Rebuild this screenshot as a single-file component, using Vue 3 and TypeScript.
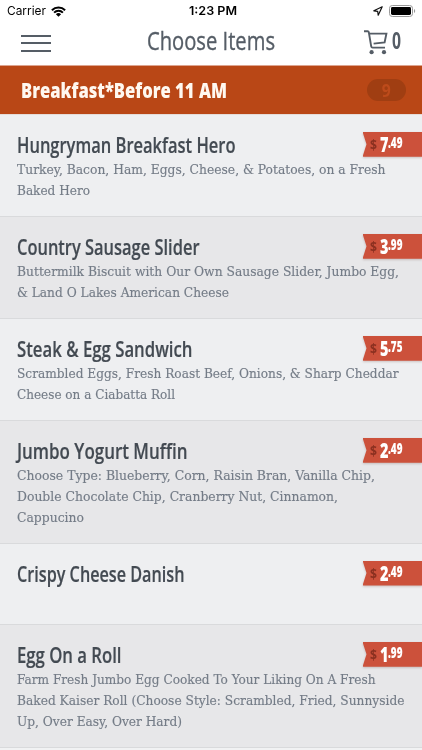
<script setup lang="ts">
interface Line {
  text: string
  width: number
}
interface MenuItem {
  title: Line
  lines: Line[]
  dollars: string
  cents: string
}

const items: MenuItem[] = [
  {
    title: { text: 'Hungryman Breakfast Hero', width: 218.5 },
    lines: [
      { text: 'Turkey, Bacon, Ham, Eggs, Cheese, & Potatoes, on a Fresh', width: 368.5 },
      { text: 'Baked Hero', width: 73 },
    ],
    dollars: '7',
    cents: '.49',
  },
  {
    title: { text: 'Country Sausage Slider', width: 182.5 },
    lines: [
      { text: 'Buttermilk Biscuit with Our Own Sausage Slider, Jumbo Egg,', width: 382 },
      { text: '& Land O Lakes American Cheese', width: 212 },
    ],
    dollars: '3',
    cents: '.99',
  },
  {
    title: { text: 'Steak & Egg Sandwich', width: 175.5 },
    lines: [
      { text: 'Scrambled Eggs, Fresh Roast Beef, Onions, & Sharp Cheddar', width: 381.5 },
      { text: 'Cheese on a Ciabatta Roll', width: 158 },
    ],
    dollars: '5',
    cents: '.75',
  },
  {
    title: { text: 'Jumbo Yogurt Muffin', width: 170.5 },
    lines: [
      { text: 'Choose Type: Blueberry, Corn, Raisin Bran, Vanilla Chip,', width: 358 },
      { text: 'Double Chocolate Chip, Cranberry Nut, Cinnamon,', width: 321 },
      { text: 'Cappucino', width: 67 },
    ],
    dollars: '2',
    cents: '.49',
  },
  {
    title: { text: 'Crispy Cheese Danish', width: 167.5 },
    lines: [],
    dollars: '2',
    cents: '.49',
  },
  {
    title: { text: 'Egg On a Roll', width: 104.5 },
    lines: [
      { text: 'Farm Fresh Jumbo Egg Cooked To Your Liking On A Fresh', width: 358.5 },
      { text: 'Baked Kaiser Roll (Choose Style: Scrambled, Fried, Sunnyside', width: 387.5 },
      { text: 'Up, Over Easy, Over Hard)', width: 165 },
    ],
    dollars: '1',
    cents: '.99',
  },
]

// Condenses a label horizontally so that it takes the given width.
const vFit = {
  mounted(el: HTMLElement, binding: { value: number }) {
    el.style.transform = `scaleX(${binding.value / el.getBoundingClientRect().width})`
  },
}
</script>

<template>
  <div class="screen">
    <div class="status">
      <div class="carrier">
        <span v-fit="39">Carrier</span>
        <svg class="wifi" width="15" height="11" viewBox="0 0 15 11">
          <path d="M.9 4.2a9.4 9.4 0 0 1 13.2 0M3.1 6.6a6.2 6.2 0 0 1 8.8 0" fill="none" stroke="#000" stroke-width="2" />
          <path d="M7.5 10.8 4.9 8.2a3.7 3.7 0 0 1 5.2 0z" />
        </svg>
      </div>
      <span v-fit="48" class="clock">1:23 PM</span>
      <div class="indicators">
        <svg width="10" height="10" viewBox="0 0 10 10">
          <path d="M9.2.8.8 4.8l3.9.5L5.2 9.2z" fill="none" stroke="#111" stroke-width="1.2" stroke-linejoin="round" />
        </svg>
        <svg width="27" height="12" viewBox="0 0 27 12">
          <rect x=".5" y=".5" width="23" height="11" rx="2.8" fill="#fff" stroke="#999" />
          <rect x="2" y="2" width="20" height="8" rx="1.4" />
          <path d="M25 4v4c1.6-.6 1.6-3.4 0-4z" fill="#999" />
        </svg>
      </div>
    </div>

    <header class="nav">
      <div class="burger"><i></i><i></i><i></i></div>
      <h1 v-fit="128">Choose Items</h1>
      <div class="cart">
        <svg width="24" height="25" viewBox="0 0 24 25" fill="none" stroke="#555d66" stroke-width="1.9">
          <path d="M0 1.2h3.6q1 0 1.2 1L7.2 16.4q.2 1.2 1.4 1.2H21M5.2 3.6H22.4L20.6 12.4 9.6 13.6" />
          <circle cx="7.6" cy="22.2" r="2.1" fill="#555d66" stroke="none" />
          <circle cx="20" cy="22.2" r="2.1" fill="#555d66" stroke="none" />
        </svg>
        <span v-fit="9">0</span>
      </div>
    </header>

    <div class="section">
      <h2 v-fit="206">Breakfast*Before 11 AM</h2>
      <span class="count"><span v-fit="9">9</span></span>
    </div>

    <ul class="menu">
      <li v-for="item in items" :key="item.title.text" class="row">
        <div class="head">
          <h3 v-fit="item.title.width">{{ item.title.text }}</h3>
          <div class="tag">
            <div class="tag-body">
              <span v-fit="7" class="currency">$</span>
              <span v-fit="8.5" class="dollars">{{ item.dollars }}</span>
              <span v-fit="14.5" class="cents">{{ item.cents }}</span>
            </div>
          </div>
        </div>
        <p>
          <span v-for="line in item.lines" :key="line.text" v-fit="line.width">{{ line.text }}</span>
        </p>
      </li>
      <li class="row next"></li>
    </ul>
  </div>
</template>

<style>
body {
  margin: 0;
}
</style>

<style scoped>
.screen {
  width: 422px;
  height: 750px;
  overflow: hidden;
  background: #fff;
  font-family: 'Open Sans', sans-serif;
  color: #434a52;
}
h1,
h2,
h3,
p,
ul {
  margin: 0;
  padding: 0;
}
h1,
h2,
h3,
span {
  transform-origin: left center;
  white-space: nowrap;
}
.status {
  display: grid;
  grid-template-columns: 1fr auto 1fr;
  align-items: center;
  height: 22px;
  padding: 0 6px 0 7px;
  font: 500 12px/22px Inter, sans-serif;
  color: #000;
}
.carrier,
.indicators {
  display: flex;
  align-items: center;
}
.carrier {
  gap: 5px;
  font-weight: 400;
}
.carrier span {
  width: max-content;
}
.clock {
  font-weight: 600;
}
.indicators {
  justify-content: flex-end;
  gap: 6px;
}
.nav {
  display: flex;
  box-sizing: border-box;
  height: 44px;
  padding-left: 21px;
  border-bottom: 1px solid #dda48f;
}
.burger {
  display: flex;
  flex-direction: column;
  gap: 5.3px;
  width: 30px;
  margin: 13px 96px 0 0;
}
.burger i {
  flex: none;
  height: 2px;
  background: #555d66;
}
.nav h1 {
  flex: none;
  width: max-content;
  font-size: 26px;
  line-height: 36px;
  font-weight: 400;
  color: #555d66;
  -webkit-text-stroke: 0.35px #555d66;
  margin-right: -60px;
}
.cart {
  display: flex;
  gap: 4px;
  margin: 8px 0 0 auto;
  width: 58px;
}
.cart svg {
  flex: none;
}
.cart span {
  width: max-content;
  height: 22px;
  font-size: 23px;
  line-height: 21px;
  font-weight: 700;
  color: #555d66;
}
.section {
  display: flex;
  align-items: center;
  justify-content: space-between;
  height: 48.3px;
  padding: 0 16px 0 21px;
  background: #b94716;
}
.section h2 {
  font-size: 21.5px;
  line-height: 48px;
  font-weight: 800;
  color: #fff8f0;
}
.count {
  flex: none;
  display: flex;
  justify-content: center;
  width: 39px;
  height: 22px;
  border-radius: 11px;
  background: #a03e12;
  font-size: 18px;
  line-height: 22px;
  font-weight: 700;
  color: #bd4b1b;
}
.count span {
  transform-origin: center;
}
.menu {
  list-style: none;
}
.row {
  box-sizing: border-box;
  min-height: 81.3px;
  padding: 16.5px 0 15.6px 16.5px;
  border-top: 1px solid #d9dadc;
  background: #eeeff1;
}
.row:first-child {
  border-top-color: #e5dcd8;
}
.row:nth-child(even) {
  background: #e7e7e9;
}
.row.next {
  background: #f1f2f3;
}
.head {
  display: flex;
  justify-content: space-between;
  height: 27.3px;
}
h3 {
  flex: none;
  font-size: 21.5px;
  line-height: 26px;
  font-weight: 600;
  -webkit-text-stroke: 0.2px #434a52;
}
.tag {
  flex: none;
  filter: drop-shadow(0 1px 1px rgba(90, 40, 30, 0.25));
}
.tag-body {
  display: grid;
  grid-template-columns: 10px 8px 1fr;
  box-sizing: border-box;
  width: 59.5px;
  height: 25px;
  padding-left: 7px;
  background: #cc513b;
  clip-path: polygon(0 0, 100% 0, 100% 100%, 0 100%, 4px 50%);
  font-weight: 800;
  color: #fff;
}
.tag-body span {
  width: max-content;
}
.currency {
  font-size: 13.5px;
  line-height: 26px;
  font-weight: 700;
  color: #8b3020;
}
.dollars {
  font-size: 21px;
  line-height: 25px;
}
.cents {
  font-size: 15px;
  line-height: 20px;
}
p {
  font-family: 'DejaVu Serif', serif;
  font-stretch: condensed;
  font-size: 13.5px;
  line-height: 20.8px;
  color: #747c87;
  -webkit-text-stroke: 0.15px #747c87;
}
p span {
  display: block;
  width: max-content;
}
</style>
